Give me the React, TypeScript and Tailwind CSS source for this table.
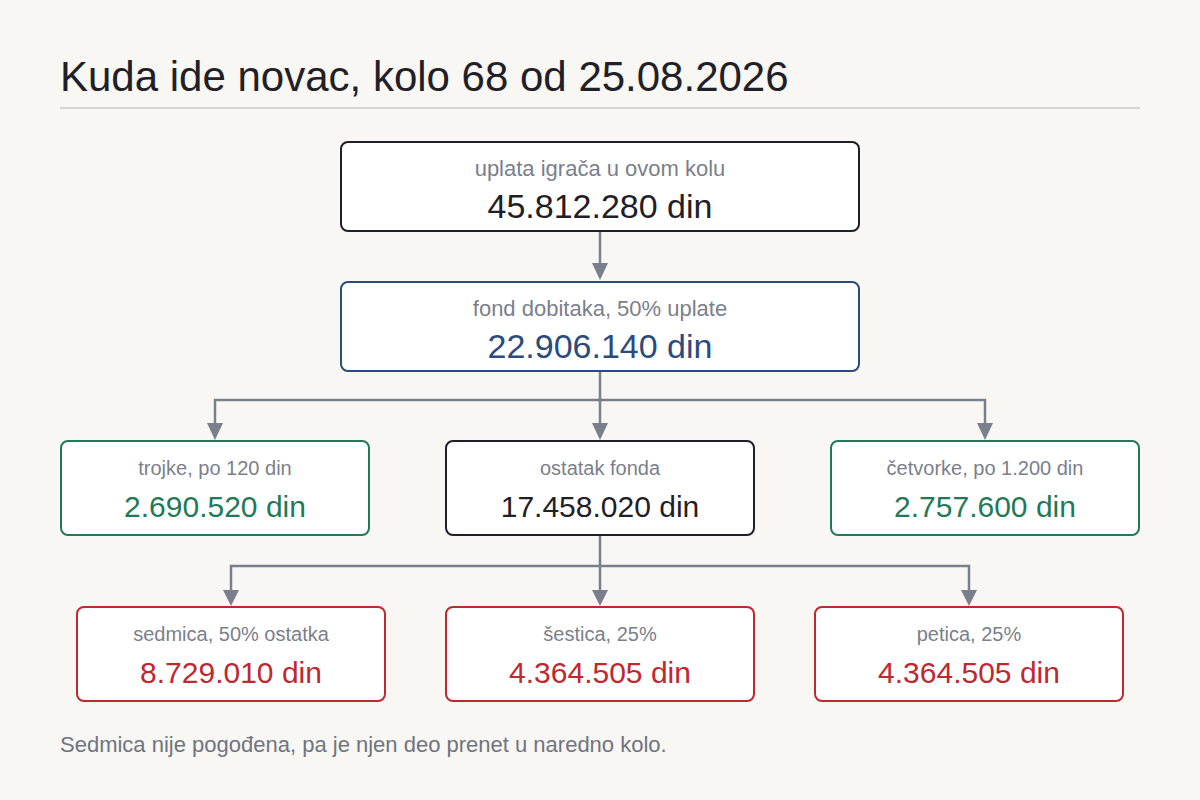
const tone = {
  dark: { border: 'border-[#1f2027]', value: 'text-[#1f2027]' },
  blue: { border: 'border-[#2b4a7e]', value: 'text-[#2b4a7e]' },
  green: { border: 'border-[#1f7a57]', value: 'text-[#1f7a57]' },
  red: { border: 'border-[#c0272f]', value: 'text-[#c0272f]' },
};

type Tone = keyof typeof tone;

function TopBox({ label, value, color }: { label: string; value: string; color: Tone }) {
  return (
    <div
      className={`flex h-[91px] w-[520px] flex-col items-center rounded-lg border-2 bg-white pt-[14px] ${tone[color].border}`}
    >
      <div className="text-[22px] leading-[24px] text-[#7b7f8b]">{label}</div>
      <div className={`mt-[6px] text-[34px] leading-[38px] ${tone[color].value}`}>{value}</div>
    </div>
  );
}

function Box({ label, value, color }: { label: string; value: string; color: Tone }) {
  return (
    <div
      className={`flex h-[96px] w-[310px] flex-col items-center rounded-lg border-2 bg-white pt-[14px] ${tone[color].border}`}
    >
      <div className="text-[20px] leading-[24px] text-[#7b7f8b]">{label}</div>
      <div className={`mt-[9px] text-[30px] leading-[36px] ${tone[color].value}`}>{value}</div>
    </div>
  );
}

function Head({ x, top, tip }: { x: number; top: number; tip: number }) {
  return <polygon points={`${x - 8},${top} ${x + 8},${top} ${x},${tip}`} fill="#7a7f8c" />;
}

export default function App() {
  return (
    <div
      className="min-h-[800px] w-[1200px] bg-[#f8f7f3] px-[60px] pt-[56px]"
      style={{ fontFamily: '"Liberation Sans", Arial, sans-serif' }}
    >
      <h1 className="text-[42px] leading-[42px] font-normal text-[#1f2028]">
        Kuda ide novac, kolo 68 od 25.08.2026
      </h1>
      <div className="mt-[9px] h-[2px] w-full bg-[#d6d5d0]" />

      <div className="mt-[32px] flex w-[1080px] flex-col items-center">
        <TopBox label="uplata igrača u ovom kolu" value="45.812.280 din" color="dark" />

        <svg width="1080" height="49" className="block">
          <path d="M540 0 V33" stroke="#7a7f8c" strokeWidth="2.5" fill="none" />
          <Head x={540} top={31} tip={48} />
        </svg>

        <TopBox label="fond dobitaka, 50% uplate" value="22.906.140 din" color="blue" />

        <svg width="1080" height="68" className="block">
          <path
            d="M540 0 V52 M155 52 V28 H925 V52"
            stroke="#7a7f8c"
            strokeWidth="2.5"
            fill="none"
          />
          <Head x={155} top={51} tip={68} />
          <Head x={540} top={51} tip={68} />
          <Head x={925} top={51} tip={68} />
        </svg>

        <div className="flex w-full justify-between">
          <Box label="trojke, po 120 din" value="2.690.520 din" color="green" />
          <Box label="ostatak fonda" value="17.458.020 din" color="dark" />
          <Box label="četvorke, po 1.200 din" value="2.757.600 din" color="green" />
        </div>

        <svg width="1080" height="70" className="block">
          <path
            d="M540 0 V55 M171 55 V30 H909 V55"
            stroke="#7a7f8c"
            strokeWidth="2.5"
            fill="none"
          />
          <Head x={171} top={54} tip={70} />
          <Head x={540} top={54} tip={70} />
          <Head x={909} top={54} tip={70} />
        </svg>

        <div className="flex w-full justify-center gap-[59px]">
          <Box label="sedmica, 50% ostatka" value="8.729.010 din" color="red" />
          <Box label="šestica, 25%" value="4.364.505 din" color="red" />
          <Box label="petica, 25%" value="4.364.505 din" color="red" />
        </div>
      </div>

      <p className="mt-[30px] text-[22px] leading-[26px] text-[#70747f]">
        Sedmica nije pogođena, pa je njen deo prenet u naredno kolo.
      </p>
    </div>
  );
}
